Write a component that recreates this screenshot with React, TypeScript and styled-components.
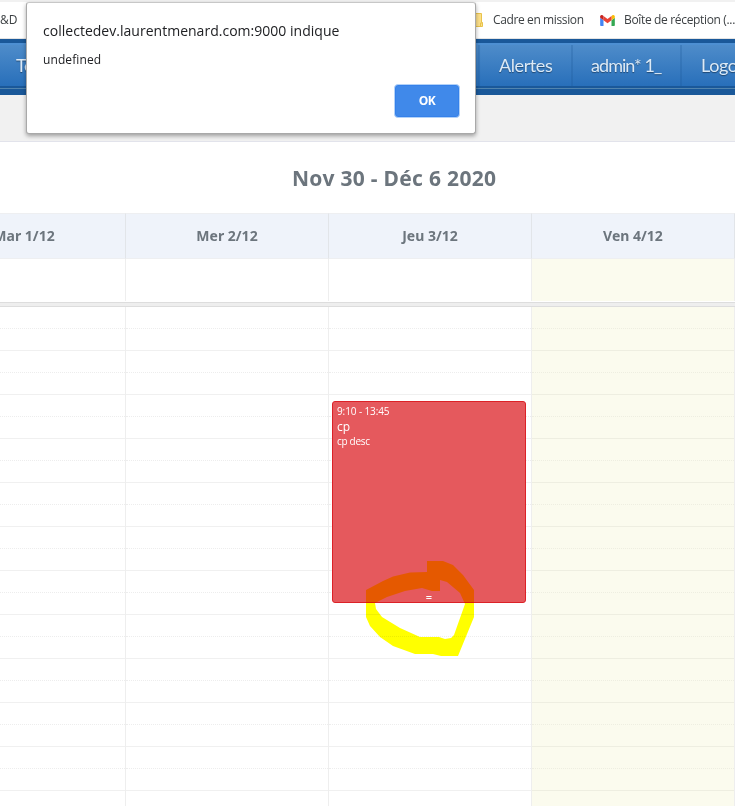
import React from "react";
import styled, { createGlobalStyle } from "styled-components";

const GlobalStyle = createGlobalStyle`
  * { box-sizing: border-box; }
  html, body { margin: 0; background: #fff; overflow: hidden; }
  body { font-family: "Open Sans", "Noto Sans", sans-serif; }
`;

const Page = styled.div`
  position: relative;
  width: 735px;
  height: 806px;
  overflow: hidden;
  display: flex;
  flex-direction: column;
  background: #fff;
`;

const BookmarkBar = styled.div`
  display: flex;
  align-items: center;
  flex: none;
  height: 39px;
  border-top: 2px solid #f1f1f1;
  border-bottom: 1px solid #e4e4e4;
  font-size: 12px;
  color: #3c4043;
  white-space: nowrap;
`;

const Bookmark = styled.span<{ $w: number; $track?: number }>`
  display: flex;
  align-items: center;
  flex: none;
  width: ${(p) => p.$w}px;
  letter-spacing: ${(p) => p.$track ?? 0}px;
  line-height: 16px;
  svg { flex: none; display: block; }
`;

const BookmarkLabel = styled.span<{ $gap: number }>`
  margin-left: ${(p) => p.$gap}px;
`;

const Nav = styled.nav`
  flex: none;
  height: 56px;
  padding-top: 4px;
  background: #1a5899;
`;

const NavItems = styled.div`
  display: flex;
  height: 43px;
  border-top: 2px solid #4d8fd2;
  background: linear-gradient(#4e8cca, #286fba);
`;

const NavItem = styled.a<{ $w: number; $pad: number; $track: number }>`
  flex: none;
  width: ${(p) => p.$w}px;
  padding-left: ${(p) => p.$pad}px;
  border-right: 2px solid rgba(26, 88, 153, 0.25);
  font: 18px/40px Lato, sans-serif;
  letter-spacing: ${(p) => p.$track}px;
  color: #dceaf7;
  text-shadow: 0 1px 1px rgba(0, 0, 0, 0.4);
  white-space: nowrap;
`;

const NavRule = styled.div`
  height: 1px;
  margin-top: 2px;
  background: #5184ae;
`;

const SubBar = styled.div`
  flex: none;
  height: 47px;
  background: #f1f1f1;
  border-bottom: 1px solid #e2e3eb;
`;

const Title = styled.h2`
  flex: none;
  height: 71px;
  margin: 0;
  padding: 0 0 0 292px;
  font: bold 21px/73px "Noto Sans", sans-serif;
  letter-spacing: 0.3px;
  color: #6c757d;
  white-space: nowrap;
`;

const Columns = styled.div`
  display: grid;
  grid-template-columns: 126px 203px 203px 203px;
  flex: none;
`;

const DayHeader = styled.div<{ $first?: boolean }>`
  height: 46px;
  margin-left: ${(p) => (p.$first ? -77 : 0)}px;
  background: #eff3fa;
  border-top: 1px solid #eeeff1;
  border-right: 1px solid #e2e5e9;
  border-bottom: 1px solid #eeeff1;
  text-align: center;
  font: bold 14px/43px "Noto Sans", sans-serif;
  letter-spacing: 0;
  color: #6c757d;
`;

const AllDayCell = styled.div<{ $today?: boolean }>`
  height: 42px;
  border-right: 1px solid #eeeeee;
  background: ${(p) => (p.$today ? "#fbfbee" : "#fff")};
`;

const Divider = styled.div`
  flex: none;
  height: 5px;
  margin-top: 1px;
  background: #eeeeee;
  border-top: 1px solid #dddddd;
  border-bottom: 1px solid #dddddd;
`;

const TimeGrid = styled(Columns)`
  height: 499px;
`;

const DayColumn = styled.div<{ $today?: boolean }>`
  position: relative;
  border-right: 1px solid #eeeeee;
  overflow: hidden;
  background: ${(p) => (p.$today ? "#fbfbee" : "#fff")};
`;

const Slot = styled.div<{ $half: boolean; $today?: boolean }>`
  height: 22px;
  border-bottom: 1px ${(p) => (p.$half ? "dotted" : "solid")}
    ${(p) => (p.$today ? "#eeeee1" : p.$half ? "#ededed" : "#f0f0f0")};
`;

const Event = styled.article`
  position: absolute;
  left: 3px;
  top: 94px;
  width: 194px;
  height: 202px;
  padding: 3px 4px 1px;
  display: flex;
  flex-direction: column;
  border: 1px solid #dc2127;
  border-radius: 3px;
  background: #e5595d;
  color: #fff;
`;

const EventLine = styled.span<{ $size: number; $lh: number; $track?: number }>`
  font-size: ${(p) => p.$size}px;
  font-weight: 500;
  line-height: ${(p) => p.$lh}px;
  letter-spacing: ${(p) => p.$track ?? 0}px;
  white-space: nowrap;
`;

const ResizeGrip = styled.span`
  margin-top: auto;
  font-size: 11px;
  font-weight: 600;
  line-height: 9px;
  text-align: center;
`;

const Highlight = styled.svg`
  position: absolute;
  left: 360px;
  top: 556px;
  mix-blend-mode: multiply;
`;

const Dialog = styled.section`
  position: absolute;
  left: 26px;
  top: 2px;
  width: 450px;
  height: 132px;
  padding: 18px 16px 0;
  display: flex;
  flex-direction: column;
  background: #fff;
  border: 1px solid #a9a9a9;
  border-top-color: #c7c7c7;
  border-radius: 3px;
  box-shadow: 0 2px 4px rgba(0, 0, 0, 0.35);
  color: #202124;
`;

const DialogTitle = styled.div`
  font-size: 14px;
  line-height: 20px;
  letter-spacing: 0.02px;
  white-space: nowrap;
`;

const DialogText = styled.div`
  margin-top: 10px;
  font-size: 12px;
  line-height: 18px;
  letter-spacing: 0.1px;
`;

const OkButton = styled.button`
  align-self: flex-end;
  width: 66px;
  height: 34px;
  margin: 15px -1px 0 0;
  padding: 0;
  border: 1px solid #b3d2f8;
  border-radius: 4px;
  background: #4089ea;
  box-shadow: inset 0 0 0 1px #3581ea;
  color: #fff;
  font: bold 12px/30px "Open Sans", sans-serif;
  letter-spacing: -0.4px;
`;

const days = [
  { label: "Mar 1/12" },
  { label: "Mer 2/12" },
  { label: "Jeu 3/12", event: true },
  { label: "Ven 4/12", today: true },
];

const slots = Array.from({ length: 23 }, (_, i) => i % 2 === 0);

function FolderIcon() {
  return (
    <svg width="15" height="15" viewBox="0 0 15 15">
      <path d="M0 .5h13.500v9h1v4H0z" fill="#fde08a" stroke="#e8c34c" />
      <path d="M12.500 13.500v-3.500h2" fill="none" stroke="#e8c34c" />
    </svg>
  );
}

function GmailIcon() {
  return (
    <svg width="15" height="11" viewBox="52 42 88 66">
      <path fill="#4285f4" d="M58 108h14V74L52 59v43c0 3.32 2.69 6 6 6" />
      <path fill="#34a853" d="M120 108h14c3.32 0 6-2.69 6-6V59l-20 15" />
      <path fill="#fbbc04" d="M120 48v26l20-15v-8c0-7.42-8.47-11.65-14.4-7.2" />
      <path fill="#ea4335" d="M72 74V48l24 18 24-18v26L96 92" />
      <path fill="#c5221f" d="M52 51v8l20 15V48l-5.600-4.200c-5.940-4.450-14.400-.22-14.400 7.200" />
    </svg>
  );
}

export default function App() {
  return (
    <Page>
      <GlobalStyle />
      <BookmarkBar>
        <Bookmark $w={468} $track={0}>&amp;D</Bookmark>
        <Bookmark $w={132} $track={-0.38}>
          <FolderIcon />
          <BookmarkLabel $gap={10}>Cadre en mission</BookmarkLabel>
        </Bookmark>
        <Bookmark $w={140} $track={-0.34}>
          <GmailIcon />
          <BookmarkLabel $gap={9}>Boîte de réception (...</BookmarkLabel>
        </Bookmark>
      </BookmarkBar>
      <Nav>
        <NavItems>
          <NavItem $w={480} $pad={16} $track={-0.4}>Te</NavItem>
          <NavItem $w={93} $pad={19} $track={-0.4}>Alertes</NavItem>
          <NavItem $w={109} $pad={18} $track={-0.95}>admin* 1_</NavItem>
          <NavItem $w={110} $pad={19} $track={-0.4}>Logout</NavItem>
        </NavItems>
        <NavRule />
      </Nav>
      <SubBar />
      <Title>Nov 30 - Déc 6 2020</Title>
      <Columns>
        {days.map((d, i) => (
          <DayHeader key={d.label} $first={i === 0}>{d.label}</DayHeader>
        ))}
      </Columns>
      <Columns>
        {days.map((d) => (
          <AllDayCell key={d.label} $today={d.today} />
        ))}
      </Columns>
      <Divider />
      <TimeGrid>
        {days.map((d) => (
          <DayColumn key={d.label} $today={d.today}>
            {slots.map((half, i) => (
              <Slot key={i} $half={half} $today={d.today} />
            ))}
            {d.event && (
              <Event>
                <EventLine $size={10} $lh={13} $track={-0.1}>9:10 - 13:45</EventLine>
                <EventLine $size={12} $lh={17}>cp</EventLine>
                <EventLine $size={10} $lh={13} $track={-0.3}>cp desc</EventLine>
                <ResizeGrip>=</ResizeGrip>
              </Event>
            )}
          </DayColumn>
        ))}
      </TimeGrid>
      <Highlight width="120" height="105" viewBox="0 0 120 105">
        <path
          fill="#ff0"
          fillRule="evenodd"
          d="M6 34L23 25L33 20.500L50 16.500L67 16V5H83L93 9L103 19L114 34V61L98 100H81L73 98H55L33 90L20 81L10 70L6 61ZM15 47L16 53L22 61L40 72L60 81H79L85 83L91 82L94 79L105 48L100 37L87 26L80 24V35H72L62 32L45 35L27 41Z"
        />
      </Highlight>
      <Dialog>
        <DialogTitle>collectedev.laurentmenard.com:9000 indique</DialogTitle>
        <DialogText>undefined</DialogText>
        <OkButton>OK</OkButton>
      </Dialog>
    </Page>
  );
}
